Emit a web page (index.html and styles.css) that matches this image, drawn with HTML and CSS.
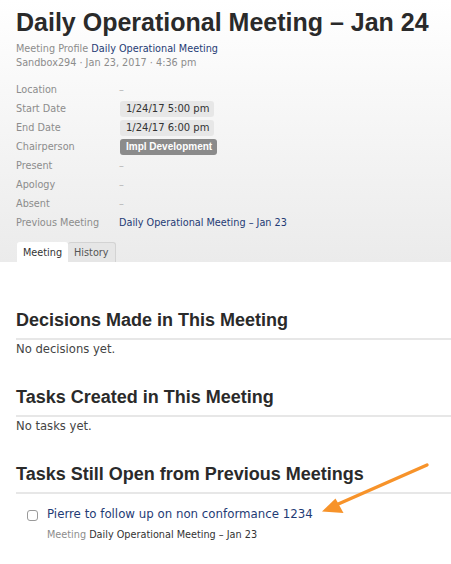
FILE: index.html
```html
<!DOCTYPE html>
<html lang="en">
  <head>
    <meta charset="UTF-8" />
    <title>Daily Operational Meeting – Jan 24</title>
    <link rel="stylesheet" href="styles.css">
  </head>
  <body>
    <div class="header">
      <h1>Daily Operational Meeting – Jan 24</h1>
      <div class="meta">
        <span class="muted">Meeting Profile</span>
        <a href="#">Daily Operational Meeting</a>
      </div>
      <div class="meta muted">Sandbox294 · Jan 23, 2017 · 4:36 pm</div>

      <div class="fields">
        <div class="field"><span class="label">Location</span><span class="dash">–</span></div>
        <div class="field"><span class="label">Start Date</span><span class="pill">1/24/17 5:00 pm</span></div>
        <div class="field"><span class="label">End Date</span><span class="pill">1/24/17 6:00 pm</span></div>
        <div class="field"><span class="label">Chairperson</span><span class="pill dark">Impl Development</span></div>
        <div class="field"><span class="label">Present</span><span class="dash">–</span></div>
        <div class="field"><span class="label">Apology</span><span class="dash">–</span></div>
        <div class="field"><span class="label">Absent</span><span class="dash">–</span></div>
        <div class="field"><span class="label">Previous Meeting</span><a href="#">Daily Operational Meeting – Jan 23</a></div>
      </div>

      <div class="tabs">
        <span class="tab active">Meeting</span>
        <span class="tab">History</span>
      </div>
    </div>

    <div class="content">
      <h2>Decisions Made in This Meeting</h2>
      <p class="empty">No decisions yet.</p>

      <h2>Tasks Created in This Meeting</h2>
      <p class="empty">No tasks yet.</p>

      <h2>Tasks Still Open from Previous Meetings</h2>
      <div class="task">
        <span class="check"></span>
        <div>
          <a href="#" class="task-title">Pierre to follow up on non conformance 1234</a>
          <div class="task-meta"><span class="muted">Meeting</span> Daily Operational Meeting – Jan 23</div>
        </div>
      </div>
    </div>

    <!-- annotation arrow pointing at the open task -->
    <svg class="arrow" width="451" height="564" viewBox="0 0 451 564">
      <line x1="427" y1="465" x2="336" y2="505" stroke="#f7932a" stroke-width="3.4" stroke-linecap="round" />
      <polygon points="322,511.5 335.5,498.5 343.5,513" fill="#f7932a" />
    </svg>
  </body>
</html>
```

FILE: styles.css
```css
body {
  margin: 0;
  font-family: "DejaVu Sans", sans-serif;
  color: #333;
  background: white;
  position: relative;
  height: 564px;
  overflow: hidden;
}
a {
  color: #1f3b75;
  text-decoration: none;
}
.muted {
  color: #8c8c8c;
}
.header {
  padding: 7px 0 0 16px;
  background: linear-gradient(#ffffff, #ebebeb);
}
h1 {
  margin: 0 0 5px;
  font-family: "Liberation Sans", Arial, sans-serif;
  font-size: 25px;
  line-height: 30px;
  font-weight: bold;
  color: #2a2a2a;
}
.meta {
  font-size: 9.7px;
  line-height: 14px;
}
.fields {
  margin-top: 10px;
}
.field {
  display: flex;
  align-items: center;
  height: 19px;
  font-size: 9.7px;
}
.label {
  width: 103px;
  flex-shrink: 0;
  color: #8c8c8c;
}
.dash {
  color: #b5b5b5;
}
.pill {
  height: 16px;
  line-height: 16px;
  padding: 0 5px 0 6px;
  margin-left: 1px;
  border-radius: 3px;
  background: #e7e7e7;
  color: #333;
  font-size: 10px;
}
.pill.dark {
  background: #8b8b8b;
  color: white;
  font-family: "Liberation Sans", Arial, sans-serif;
  font-weight: bold;
  font-size: 10px;
}
.tabs {
  display: flex;
  margin-top: 10px;
  padding-left: 1px;
}
.tab {
  height: 19px;
  line-height: 19px;
  padding: 0 6px;
  font-size: 9.7px;
  border: 1px solid #d3d3d3;
  border-bottom: none;
  border-left: none;
  border-radius: 3px 3px 0 0;
  background: #e6e6e6;
  color: #555;
}
.tab.active {
  padding: 0 5px 0 6px;
  background: white;
  border-color: white;
  color: #333;
}
.content {
  padding: 47px 0 0 16px;
}
h2 {
  margin: 0;
  font-family: "Liberation Sans", Arial, sans-serif;
  font-size: 18px;
  line-height: 22px;
  font-weight: bold;
  color: #2a2a2a;
  padding-bottom: 7px;
  border-bottom: 2px solid #e7e7e7;
}
.empty {
  margin: 2px 0 30px;
  font-size: 11.6px;
  line-height: 14px;
  color: #444;
}
.task {
  display: flex;
  gap: 9px;
  padding: 12px 0 0 11px;
}
.check {
  flex-shrink: 0;
  width: 9px;
  height: 9px;
  margin-top: 4px;
  border: 1px solid #9a9a9a;
  border-radius: 3px;
  background: white;
}
.task-title {
  display: block;
  font-size: 11.8px;
  line-height: 16px;
}
.task-meta {
  margin-top: 6px;
  font-size: 9.7px;
  line-height: 14px;
  color: #333;
}
.arrow {
  position: absolute;
  left: 0;
  top: 0;
}
```
